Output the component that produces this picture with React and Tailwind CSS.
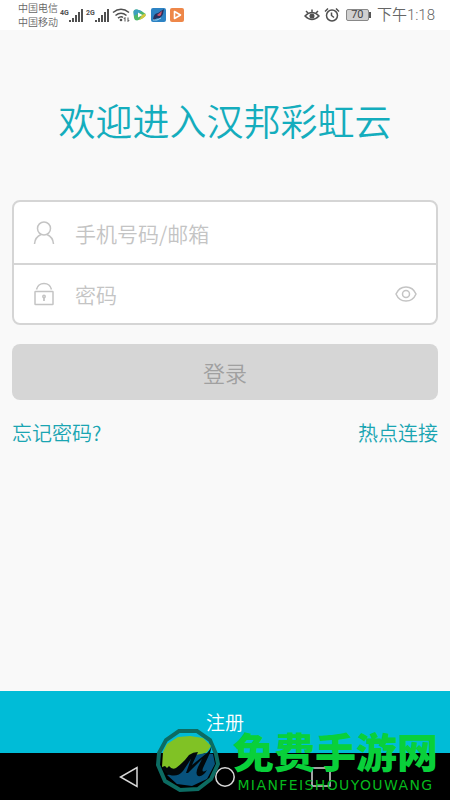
import { useState } from "react";

function SignalIcon() {
  return (
    <svg viewBox="0 0 14 13" className="w-[14px] h-[13px]" fill="#505050">
      <rect x="0" y="11" width="2" height="2" />
      <rect x="3" y="9" width="2" height="4" />
      <rect x="6" y="6" width="2" height="7" />
      <rect x="9" y="3" width="2" height="10" />
      <rect x="12" y="0" width="2" height="13" />
    </svg>
  );
}

function Network({ label }) {
  return (
    <div className="flex items-start">
      <span className="w-[9px] font-[Roboto,sans-serif] text-[7px] leading-2 font-bold text-[#505050]">{label}</span>
      <SignalIcon />
    </div>
  );
}

function WifiIcon() {
  return (
    <svg viewBox="0 0 18 16" className="w-[18px] h-4" fill="none" stroke="#505050" strokeWidth="1.6">
      <path d="M1 5.5Q9-1 17 5.5M3.5 8.5Q9 4 14.5 8.5M6 11.2Q9 8.800 11 10.500" />
      <circle cx="9" cy="13" r="1.3" fill="#505050" stroke="none" />
      <path d="M13 14.500V10.500M11.800 12L13 10.500M16 10.500V14.500M17.200 13L16 14.500" strokeWidth="1" />
    </svg>
  );
}

function AppIcons() {
  return (
    <svg viewBox="0 0 52 16" className="w-[52px] h-4">
      <path d="M0.500 5Q0.500 2 4 2.500Q9 3.500 12 6.500Q13.500 8 12 9.500Q9 12.500 4 13.500Q1.500 13.500 1 11Z" fill="#4fb86a" />
      <path d="M0.500 5Q0.500 2 4 2.500Q7 3 9 4.500L1 9Z" fill="#3d9fc0" />
      <path d="M6 13Q10 11.500 12 9.500Q13.500 8 12 6.500L9 8Z" fill="#d5c83c" />
      <path d="M5 5.500L9.500 8L5 10.500Z" fill="#fff" />
      <rect x="18" y="1" width="15" height="14" rx="2" fill="#2d83c4" />
      <path d="M20 12Q21 6 25 6L31 2L30 7Q28 12 24 11L21 13.500Z" fill="#27315e" />
      <path d="M24 8L29 4L28 8Q26 10 24 8Z" fill="#d0566a" />
      <path d="M20 13Q24 14 28 11" fill="none" stroke="#9fd6f0" />
      <rect x="37" y="1" width="14" height="14" rx="2" fill="#ee8749" />
      <path d="M41.500 4.500V11.500L47.500 8Z" fill="none" stroke="#fff" strokeWidth="1.6" strokeLinejoin="round" />
    </svg>
  );
}

function StatusBar() {
  return (
    <header className="flex items-center h-[30px] bg-white pl-[18px] pr-[15px] text-[#666]">
      <div className="text-[10px] leading-[14px] font-[350] mr-[2px]">
        <div>中国电信</div>
        <div>中国移动</div>
      </div>
      <div className="flex items-center gap-[3px]">
        <Network label="4G" />
        <Network label="2G" />
        <WifiIcon />
        <AppIcons />
      </div>
      <div className="flex items-center gap-1 ml-auto">
        <svg viewBox="0 0 16 14" className="w-4 h-[14px]" fill="none" stroke="#505050" strokeWidth="1.5">
          <path d="M1 8Q8 1 15 8Q8 15 1 8ZM8 4V1.500M4 5L2 3M12 5L14 3" />
          <circle cx="8" cy="8" r="1.800" fill="#505050" />
        </svg>
        <svg viewBox="0 0 16 16" className="w-4 h-4" fill="none" stroke="#505050" strokeWidth="1.5">
          <circle cx="8" cy="8.500" r="5.500" />
          <path d="M7.500 5.500V8.500L10 10.500M1 4.500L4 1.500M15 4.500L12 1.500" />
        </svg>
        <div className="flex items-center mx-[2px]">
          <span className="w-[23px] border border-[#888] bg-[#d0d0d0] rounded-xs text-center font-[Roboto,sans-serif] text-[11px] leading-[10px] text-[#444]">70</span>
          <span className="w-[2px] h-[6px] bg-[#555]" />
        </div>
        <span className="font-[Roboto,'Noto_Sans_CJK_SC',sans-serif] text-[15px] leading-5 font-[350]">下午1:18</span>
      </div>
    </header>
  );
}

function UserIcon() {
  return (
    <svg viewBox="0 0 22 24" className="w-[22px] h-6 shrink-0" fill="none" stroke="#c4c4c4" strokeWidth="1.5">
      <circle cx="11" cy="7.500" r="6.500" />
      <path d="M1.500 23Q2 16 8 13.500M14 13.500Q20 16 20.500 23" />
    </svg>
  );
}

function LockIcon() {
  return (
    <svg viewBox="0 0 22 24" className="w-[22px] h-6 shrink-0" fill="none" stroke="#c4c4c4" strokeWidth="1.5">
      <rect x="2" y="9.500" width="18" height="13" rx="0.5" />
      <path d="M3.500 7.500Q5 1.500 11 1.500Q17 1.500 18.500 7.500" />
      <circle cx="11" cy="14.500" r="1.2" />
      <path d="M11 15V19" strokeWidth="1.800" />
    </svg>
  );
}

function EyeIcon() {
  return (
    <svg viewBox="0 0 22 16" className="w-[22px] h-4" fill="none" stroke="#c4c4c4" strokeWidth="1.5">
      <path d="M1 8Q4 1 11 1Q18 1 21 8Q18 15 11 15Q4 15 1 8Z" />
      <circle cx="11" cy="8" r="3.5" />
    </svg>
  );
}

function Watermark() {
  return (
    <div className="absolute right-3 bottom-[2px] flex items-start pointer-events-none">
      <svg viewBox="0 0 66 66" className="w-[66px] h-[66px]">
        <path d="M24 3L42 3L55 12L61 26L63 36L56 51L43 61L25 62L10 53L3 37L4 25L11 12Z" fill="none" stroke="#0c6b62" strokeWidth="4" />
        <path d="M8 24L12 16L23 9L35 8L48 10L56 18L52 24L40 30L26 42L17 42L7 39Z" fill="#80c225" />
        <path d="M12 47L24 44L40 27L51 25L58 26L60 36L52 51L37 58L22 56Z" fill="#07527c" />
        <path d="M7 39L10 38L12 40L14 38Q17 42 21 40Q29 34 34 27Q38 24 43 24L37 37L52 25Q56 21 56 18Q56 24 54 27L48 40Q46 46 52 42Q48 49 43 48Q40 46 43 39L47 31L33 45L31 45L36 31L28 43Q23 49 15 47Q9 45 7 39Z" fill="#02080b" />
      </svg>
      <div className="flex flex-col items-center ml-3 text-[#09d03a]">
        <span className="text-[41px] leading-[44px] font-black">免费手游网</span>
        <span className="font-['DejaVu_Sans',sans-serif] text-[14px] leading-[26px] tracking-widest text-[#06b91d]">MIANFEISHOUYOUWANG</span>
      </div>
    </div>
  );
}

export default function App() {
  const [account, setAccount] = useState("");
  const [password, setPassword] = useState("");
  const [visible, setVisible] = useState(false);

  return (
    <div className="relative min-h-screen flex flex-col bg-[#f9f9f9] font-['Noto_Sans_CJK_SC',sans-serif]">
      <StatusBar />

      <main className="flex-1 px-3 pt-[64px]">
        <h1 className="text-center text-[37px] leading-[52px] font-[350] text-[#14adbd]">欢迎进入汉邦彩虹云</h1>

        <form className="mt-[54px]" onSubmit={(e) => e.preventDefault()}>
          <div className="border-2 border-[#d5d5d5] rounded-lg bg-white divide-y-2 divide-[#d5d5d5]">
            <div className="flex items-center h-[63px] px-[19px] gap-5">
              <UserIcon />
              <input
                type="text"
                aria-label="手机号码/邮箱"
                placeholder="手机号码/邮箱"
                value={account}
                onChange={(e) => setAccount(e.target.value)}
                className="flex-1 min-w-0 text-[21px] leading-8 font-[350] outline-none placeholder:text-[#c4c4c4]"
              />
            </div>
            <div className="flex items-center h-[58px] px-[19px] gap-5">
              <LockIcon />
              <input
                type={visible ? "text" : "password"}
                aria-label="密码"
                placeholder="密码"
                value={password}
                onChange={(e) => setPassword(e.target.value)}
                className="flex-1 min-w-0 text-[21px] leading-8 font-[350] outline-none placeholder:text-[#c4c4c4]"
              />
              <button type="button" aria-label="显示密码" onClick={() => setVisible(!visible)}>
                <EyeIcon />
              </button>
            </div>
          </div>

          <button type="submit" className="w-full h-14 mt-[19px] rounded-lg bg-[#d6d6d6] text-[22px] font-[350] text-[#a0a0a0]">
            登录
          </button>
        </form>

        <div className="flex justify-between mt-[18px] text-[20px] leading-[30px] font-[350] text-[#1aa5b2]">
          <a href="#forgot">忘记密码?</a>
          <a href="#hotspot">热点连接</a>
        </div>
      </main>

      <button type="button" className="h-[62px] bg-[#00bcd7] text-[19px] font-[350] text-white">注册</button>

      <nav className="flex items-center justify-center gap-[76px] h-[47px] bg-black">
        <button type="button" aria-label="返回">
          <svg viewBox="0 0 20 22" className="w-5 h-[22px]" fill="none" stroke="#d8d8d8" strokeWidth="1.5">
            <path d="M18 1.500V20.500L1.500 11Z" />
          </svg>
        </button>
        <button type="button" aria-label="主页">
          <svg viewBox="0 0 20 20" className="w-5 h-5" fill="none" stroke="#d8d8d8" strokeWidth="1.5">
            <circle cx="10" cy="10" r="9.200" />
          </svg>
        </button>
        <button type="button" aria-label="最近任务">
          <svg viewBox="0 0 20 20" className="w-5 h-5" fill="none" stroke="#d8d8d8" strokeWidth="1.5">
            <rect x="1" y="1" width="18" height="18" />
          </svg>
        </button>
      </nav>

      <Watermark />
    </div>
  );
}
